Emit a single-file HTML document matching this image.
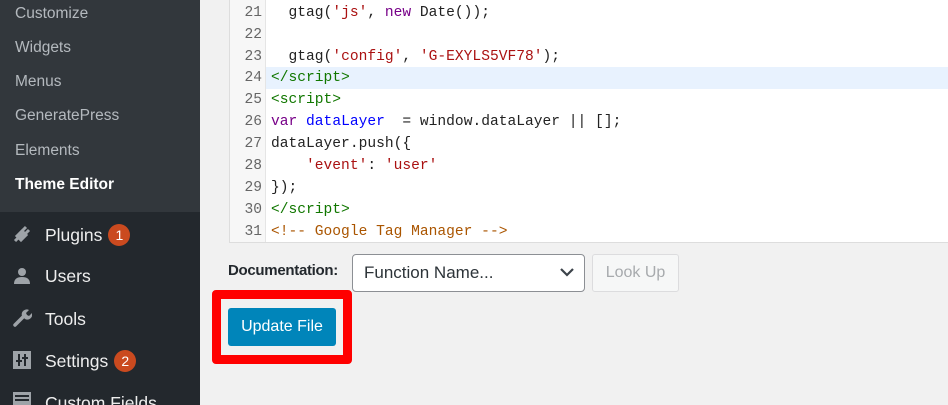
<!DOCTYPE html><html style="overflow:hidden"><head><style>
html,body{margin:0;width:948px;height:405px;overflow:hidden}
body{background:#f1f1f1;font-family:"Liberation Sans",sans-serif;position:relative}
#sb{position:absolute;left:0;top:0;width:200px;height:405px;background:#23282d}
#sub{position:absolute;left:0;top:0;width:200px;height:212px;background:#32373c}
.si{position:absolute;left:15px;font-size:15.5px;color:#b4b9be;line-height:20px}
.mi{position:absolute;left:45px;font-size:17.5px;color:#eee;line-height:22px}
.ic{position:absolute;left:12px;width:20px;height:20px}
.badge{display:inline-block;width:22px;height:22px;border-radius:11px;background:#ca4a1f;color:#fff;font-size:14px;text-align:center;line-height:22px;margin-left:6px;vertical-align:1px}
#ed{position:absolute;left:229px;top:-10px;width:719px;height:251px;background:#fff;border:1px solid #ddd;border-right:0}
#gut{position:absolute;left:0;top:0;width:35px;height:100%;background:#f7f7f7;border-right:1px solid #e5e5e5}
.ln{position:absolute;left:0;width:32px;text-align:right;font:14.6px "Liberation Mono",monospace;color:#666;line-height:22px}
.cd{position:absolute;left:41px;font:14.6px "Liberation Mono",monospace;color:#222;line-height:22px;white-space:pre}
.s{color:#a11}.k{color:#708}.t{color:#170}.v{color:#00f}.c{color:#a50}
</style></head><body>
<div id="sb"><div id="sub"></div>
<div class="si" style="top:4px">Customize</div>
<div class="si" style="top:38px">Widgets</div>
<div class="si" style="top:72px">Menus</div>
<div class="si" style="top:106px">GeneratePress</div>
<div class="si" style="top:141px">Elements</div>
<div class="si" style="top:175px;color:#fff;font-weight:bold">Theme Editor</div>
<svg class="ic" style="top:224px" viewBox="0 0 20 20"><path d="M3 17l3-3M5 12l5-5 4 4-5 5zM10 7l4-4M13 10l4-4" stroke="#9ea3a8" stroke-width="3" fill="#9ea3a8"/></svg>
<div class="mi" style="top:224px">Plugins<span class="badge">1</span></div>
<svg class="ic" style="top:266px" viewBox="0 0 20 20"><circle cx="10" cy="6" r="4" fill="#9ea3a8"/><path d="M2 18c0-5 3-7 8-7s8 2 8 7z" fill="#9ea3a8"/></svg>
<div class="mi" style="top:265px">Users</div>
<svg class="ic" style="top:308px" viewBox="0 0 20 20"><path d="M3 17L11 9" stroke="#9ea3a8" stroke-width="3.5" stroke-linecap="round"/><path d="M10 8a5 5 0 0 1 7-6l-3 3 1 2 2 1 3-3a5 5 0 0 1-7 6z" fill="#9ea3a8"/></svg>
<div class="mi" style="top:308px">Tools</div>
<svg class="ic" style="top:350px" viewBox="0 0 20 20"><rect x="1" y="1" width="18" height="18" fill="#9ea3a8"/><path d="M7 4v12M13 4v12M4 11h6M10 8h6" stroke="#23282d" stroke-width="2"/></svg>
<div class="mi" style="top:350px">Settings<span class="badge">2</span></div>
<svg class="ic" style="top:391px" viewBox="0 0 20 20"><rect x="1" y="1" width="18" height="18" fill="#9ea3a8"/><path d="M3 5h14M3 9h14" stroke="#23282d" stroke-width="2"/></svg>
<div class="mi" style="top:392px">Custom Fields</div>
</div>
<div id="ed"><div id="gut"></div>
<div style="position:absolute;left:36px;top:76px;width:683px;height:22px;background:#e8f2fe"></div>
<div class="ln" style="top:11px">21</div><div class="cd" style="top:11px">  gtag(<span class="s">'js'</span>, <span class="k">new</span> Date());</div>
<div class="ln" style="top:33px">22</div>
<div class="ln" style="top:55px">23</div><div class="cd" style="top:55px">  gtag(<span class="s">'config'</span>, <span class="s">'G-EXYLS5VF78'</span>);</div>
<div class="ln" style="top:76px">24</div><div class="cd t" style="top:76px">&lt;/script&gt;</div>
<div class="ln" style="top:98px">25</div><div class="cd t" style="top:98px">&lt;script&gt;</div>
<div class="ln" style="top:120px">26</div><div class="cd" style="top:120px"><span class="k">var</span> <span class="v">dataLayer</span>  = window.dataLayer || [];</div>
<div class="ln" style="top:142px">27</div><div class="cd" style="top:142px">dataLayer.push({</div>
<div class="ln" style="top:164px">28</div><div class="cd" style="top:164px">    <span class="s">'event'</span>: <span class="s">'user'</span></div>
<div class="ln" style="top:186px">29</div><div class="cd" style="top:186px">});</div>
<div class="ln" style="top:208px">30</div><div class="cd t" style="top:208px">&lt;/script&gt;</div>
<div class="ln" style="top:230px">31</div><div class="cd c" style="top:230px">&lt;!-- Google Tag Manager --&gt;</div>
</div>
<div style="position:absolute;left:228px;top:262px;font-size:15px;color:#23282d;font-weight:bold;letter-spacing:-0.3px">Documentation:</div>
<div style="position:absolute;left:352px;top:254px;width:231px;height:36px;background:#fff;border:1px solid #8c8f94;border-radius:4px"><span style="position:absolute;left:11px;top:8px;font-size:17px;color:#2c3338">Function Name...</span><svg style="position:absolute;right:10px;top:12px" width="14" height="10" viewBox="0 0 14 10"><path d="M1 2l6 6 6-6" stroke="#3c434a" stroke-width="2.2" fill="none"/></svg></div>
<div style="position:absolute;left:592px;top:254px;width:85px;height:36px;background:#f6f7f7;border:1px solid #dcdcde;border-radius:3px;color:#a7aaad;font-size:16px;text-align:center;line-height:36px">Look Up</div>
<div style="position:absolute;left:212px;top:290px;width:122px;height:56px;border:9px solid #f00;border-radius:4px"></div>
<div style="position:absolute;left:228px;top:308px;width:108px;height:38px;background:#0085ba;border-radius:3px;color:#fff;font-size:16px;text-align:center;line-height:38px">Update File</div>
</body></html>
